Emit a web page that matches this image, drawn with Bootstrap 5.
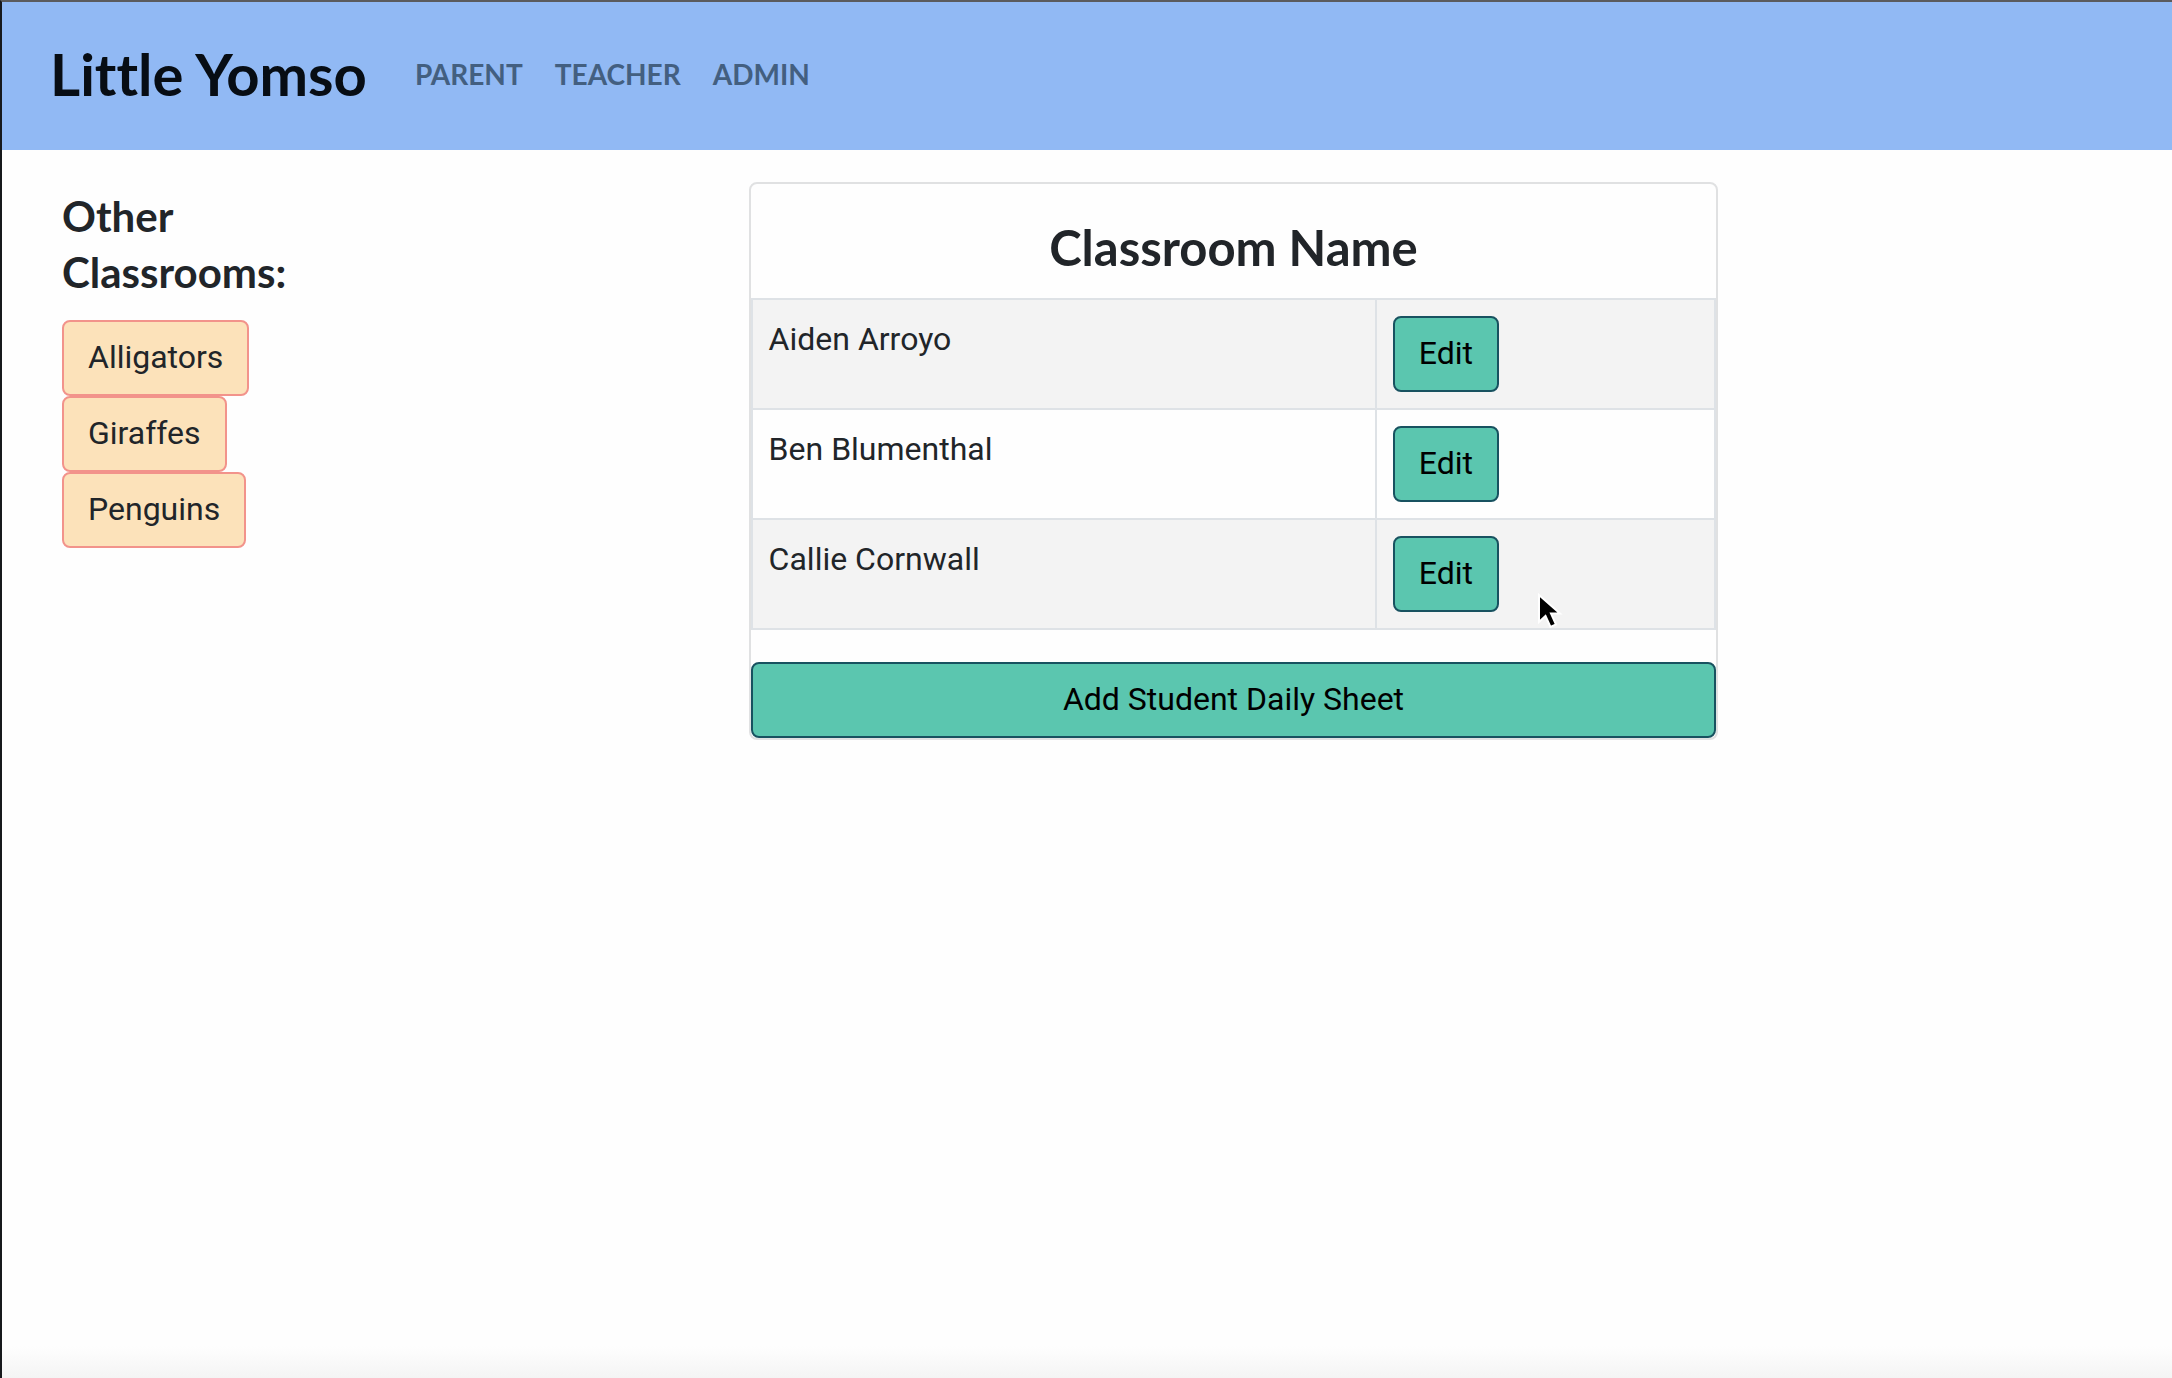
<!DOCTYPE html>
<html lang="en">
<head>
<meta charset="utf-8">
<meta name="viewport" content="width=device-width, initial-scale=1">
<title>Little Yomso</title>
<link href="https://cdn.jsdelivr.net/npm/bootstrap@5.3.0/dist/css/bootstrap.min.css" rel="stylesheet">
<style>
html { font-size: 32px; }
body { font-family: Roboto, "Liberation Sans", sans-serif; color: #212529; line-height: 46px; }
.app-frame {
  min-height: 100vh;
  border-top: 2px solid #5b5b5d;
  border-left: 2px solid #17191c;
  background: linear-gradient(to top, #f4f4f4, #fefefe 32px);
}
.display-face { font-family: Lato, "Open Sans", sans-serif; font-weight: 700; font-variant-ligatures: none; }
.top-bar { background: #91b9f4; height: 148px; padding: 0 48px 4px; }
.top-bar .navbar-brand { font-size: 58px; line-height: 84px; color: #070d14; margin-right: 32px; padding: 0; }
.top-bar .nav-link { font-size: 28px; line-height: 48px; color: #435f80; padding: 0 16px; }
.side-list { flex: 0 0 33.3%; padding: 38px 0 0 60px; }
.side-title { font-size: 42px; line-height: 56px; margin-bottom: 20px; max-width: 260px; }
.btn { --bs-btn-border-width: 2px; --bs-btn-border-radius: 8px; --bs-btn-line-height: 46px; --bs-btn-padding-x: 24px; --bs-btn-padding-y: 12px; padding-bottom: 14px; }
.btn-room { --bs-btn-bg: #fce2ba; --bs-btn-border-color: #f2938b; --bs-btn-color: #212529; --bs-btn-hover-bg: #f9d59c; --bs-btn-hover-border-color: #f2938b; }
.btn-sheet { --bs-btn-bg: #5bc6af; --bs-btn-border-color: #185260; --bs-btn-color: #000; --bs-btn-hover-bg: #49b39c; --bs-btn-hover-border-color: #185260; }
.sheet-col { flex: 0 0 46.9%; padding: 32px 24px; }
.room-card { --bs-card-border-width: 2px; --bs-card-border-color: #e0e1e2; --bs-card-border-radius: 8px; --bs-card-inner-border-radius: 6px; --bs-card-bg: #fefefe; }
.room-title { font-size: 49px; line-height: 58px; padding: 34px 0 22px; margin: 0; }
.roster { --bs-table-border-color: #dee2e6; --bs-table-bg: transparent; --bs-table-striped-bg: #f3f3f3; margin-bottom: 32px; border-collapse: separate; border-spacing: 0; border: 0 solid #dee2e6; border-width: 2px 2px 0; }
.roster > tbody > tr { border-width: 0; }
.roster > tbody > tr > td { border-width: 0 0 2px; padding: 16px; }
.roster > tbody > tr > td + td { border-left-width: 2px; width: 35.3%; }
.roster .btn { display: block; }
.pointer-mark { left: 160px; top: 73px; z-index: 2; }
</style>
</head>
<body>
<div class="app-frame">
  <nav class="navbar navbar-expand top-bar">
    <a class="navbar-brand display-face" href="#">Little Yomso</a>
    <ul class="navbar-nav display-face">
      <li class="nav-item"><a class="nav-link" href="#">PARENT</a></li>
      <li class="nav-item"><a class="nav-link" href="#">TEACHER</a></li>
      <li class="nav-item"><a class="nav-link" href="#">ADMIN</a></li>
    </ul>
  </nav>
  <main class="row g-0">
    <aside class="side-list">
      <h3 class="side-title display-face">Other Classrooms:</h3>
      <div class="d-flex flex-column align-items-start">
        <button type="button" class="btn btn-room">Alligators</button>
        <button type="button" class="btn btn-room">Giraffes</button>
        <button type="button" class="btn btn-room">Penguins</button>
      </div>
    </aside>
    <section class="sheet-col">
      <div class="card room-card">
        <h2 class="room-title display-face text-center">Classroom Name</h2>
        <table class="table table-striped roster">
          <tbody>
            <tr><td>Aiden Arroyo</td><td><button type="button" class="btn btn-sheet">Edit</button></td></tr>
            <tr><td>Ben Blumenthal</td><td><button type="button" class="btn btn-sheet">Edit</button></td></tr>
            <tr><td>Callie Cornwall</td><td class="position-relative"><button type="button" class="btn btn-sheet">Edit</button>
              <svg class="position-absolute pointer-mark" width="26" height="38" viewBox="0 0 26 38" aria-hidden="true"><path d="M2 2V29L8.500 23L13.500 34L19 31.500L14 20.500H23Z" fill="#000" stroke="#fff" stroke-width="2"/></svg></td></tr>
          </tbody>
        </table>
        <button type="button" class="btn btn-sheet">Add Student Daily Sheet</button>
      </div>
    </section>
  </main>
</div>
<script src="https://cdn.jsdelivr.net/npm/bootstrap@5.3.0/dist/js/bootstrap.bundle.min.js"></script>
</body>
</html>
